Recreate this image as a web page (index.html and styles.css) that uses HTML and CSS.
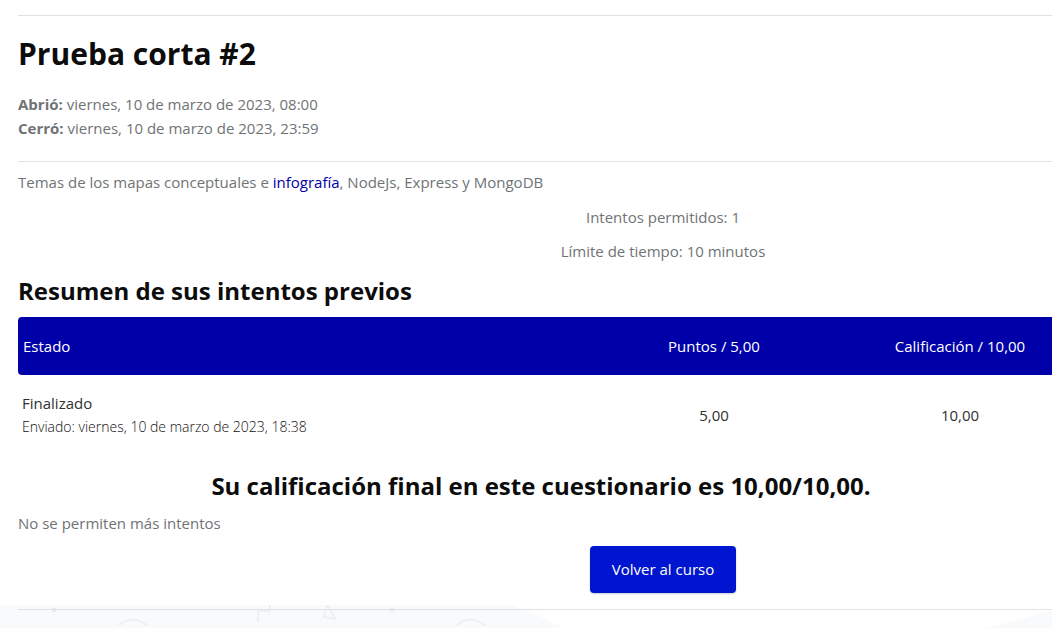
FILE: index.html
```html
<!DOCTYPE html>
<html lang="es">
<head>
<meta charset="utf-8">
<meta name="viewport" content="width=device-width, initial-scale=1">
<title>Prueba corta #2</title>
<link rel="stylesheet" href="styles.css">
</head>
<body>
<div class="page">
  <svg class="backdrop" width="1052" height="23" viewBox="0 0 1052 23" aria-hidden="true">
    <path fill="#f9fafc" d="M0 0H512Q538 10 565 23H0zM984 23Q1020 15 1052 5V23z"/>
    <g fill="none" stroke="#eeeff1" stroke-width="2">
      <path d="M119 20Q133 9 148 21M457 20Q471 9 486 21M258 17V6H270V0M327 0L324 12L335 14L328 0"/>
    </g>
    <path fill="#eaebed" d="M52 3H56V7H52zM390 3H394V7H390z"/>
  </svg>
  <main class="activity">
    <header class="intro">
      <h1 class="title">Prueba corta #2</h1>
      <div class="dates">
        <div><strong>Abrió:</strong> viernes, 10 de marzo de 2023, 08:00</div>
        <div><strong>Cerró:</strong> viernes, 10 de marzo de 2023, 23:59</div>
      </div>
    </header>
    <p class="description">Temas de los mapas conceptuales e <a class="link" href="#">infografía</a>, NodeJs, Express y MongoDB</p>
    <div class="rules">
      <p>Intentos permitidos: 1</p>
      <p>Límite de tiempo: 10 minutos</p>
    </div>
    <h2 class="subtitle">Resumen de sus intentos previos</h2>
    <table class="attempts">
      <thead>
        <tr><th class="state" scope="col">Estado</th><th scope="col">Puntos / 5,00</th><th scope="col">Calificación / 10,00</th></tr>
      </thead>
      <tbody>
        <tr>
          <td class="state">Finalizado<span class="sent">Enviado: viernes, 10 de marzo de 2023, 18:38</span></td>
          <td>5,00</td>
          <td>10,00</td>
        </tr>
      </tbody>
    </table>
    <h2 class="subtitle final">Su calificación final en este cuestionario es 10,00/10,00.</h2>
    <p class="notice">No se permiten más intentos</p>
    <div class="actions"><button class="button" type="button">Volver al curso</button></div>
    <hr class="divider">
  </main>
</div>
</body>
</html>
```
FILE: styles.css
```css
* { box-sizing: border-box; }

body {
  margin: 0;
  background: #fff;
  color: #6f7376;
  font: 15px/24px "Open Sans", "Noto Sans", sans-serif;
}

h1, h2, p { margin: 0; }

.page {
  position: relative;
  min-height: 100vh;
  padding: 15px 0 18px 18px;
  overflow: hidden;
}

.backdrop {
  position: absolute;
  left: 0;
  bottom: 0;
}

/* The activity column is wider than the viewport and is clipped by the page. */
.activity {
  position: relative;
  margin-right: -256px;
}

.intro {
  border: solid #e1e1e1;
  border-width: 1px 0;
  padding: 20px 0 21px;
}

.title {
  color: #0c0c0c;
  font-size: 30px;
  line-height: 36px;
  font-weight: 700;
}

.dates { margin-top: 20px; }

.description { margin-top: 8px; }

.link {
  color: #0000a8;
  text-decoration: none;
}

.rules {
  display: grid;
  gap: 10px;
  margin-top: 11px;
  text-align: center;
}

.subtitle {
  margin-top: 12px;
  color: #0c0c0c;
  font-size: 24px;
  line-height: 32px;
  font-weight: 700;
}

.attempts {
  width: calc(100% - 225px);
  margin-top: 10px;
  border-spacing: 0;
  table-layout: fixed;
  color: #303030;
  text-align: center;
}

.attempts th {
  width: 246px;
  height: 58px;
  padding: 0 5px;
  background: #0000a8;
  color: #fff;
  font-weight: 400;
}

.attempts th.state {
  width: auto;
  border-radius: 4px 0 0 4px;
}

.attempts td {
  height: 80px;
  padding: 16px 4px;
}

.attempts .state { text-align: left; }

.sent {
  display: block;
  color: #101010;
  font-size: 14px;
  font-weight: 300;
}

.final {
  margin: 15px 244px 0 0;
  text-align: center;
}

.notice { margin-top: 9px; }

.actions {
  display: flex;
  justify-content: center;
  margin: 11px 0 16px;
}

.button {
  padding: 11px 22px 12px;
  border: 0;
  border-radius: 4px;
  background: #0015cf;
  box-shadow: 0 1px 2px #00000033;
  color: #fff;
  font: inherit;
}

.divider {
  margin: 0;
  border: 0;
  border-top: 1px solid #e1e1e1;
}
```
